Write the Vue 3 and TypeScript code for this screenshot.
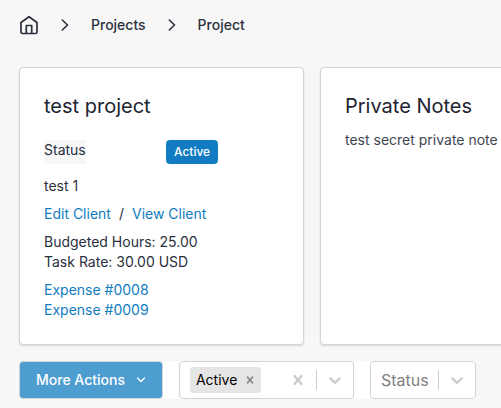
<script setup lang="ts">
import { ref } from 'vue'

interface Expense {
  id: number
  number: string
}

const expenses: Expense[] = [
  { id: 8, number: '0008' },
  { id: 9, number: '0009' },
]

const lifecycle = ref<string[]>(['Active'])
const status = ref('')

function removeState(name: string): void {
  lifecycle.value = lifecycle.value.filter((item) => item !== name)
}
</script>

<template>
  <main class="page">
    <nav class="breadcrumbs" aria-label="Breadcrumb">
      <a class="home" href="#" aria-label="Home">
        <svg width="20" height="20" viewBox="0 0 20 20" fill="none" stroke="currentColor" stroke-width="1.7" stroke-linecap="round" stroke-linejoin="round">
          <path d="M2 7.500 10 1.800l8 5.700V17a1.500 1.500 0 0 1-1.500 1.500h-13A1.500 1.500 0 0 1 2 17Z" />
          <path d="M7.300 18.200V10.500h5.400v7.700" />
        </svg>
      </a>
      <svg class="separator" width="8" height="12" viewBox="0 0 8 12" fill="none" stroke="currentColor" stroke-width="1.6" stroke-linecap="round" stroke-linejoin="round">
        <path d="M1.300 1 6.500 6l-5.200 5" />
      </svg>
      <a href="#">Projects</a>
      <svg class="separator" width="8" height="12" viewBox="0 0 8 12" fill="none" stroke="currentColor" stroke-width="1.6" stroke-linecap="round" stroke-linejoin="round">
        <path d="M1.300 1 6.500 6l-5.200 5" />
      </svg>
      <a href="#" aria-current="page">Project</a>
    </nav>

    <div class="cards">
      <section class="card">
        <h2>test project</h2>
        <div class="status-row">
          <span class="status-label">Status</span>
          <span class="badge">Active</span>
        </div>
        <div class="details">
          <p>test 1</p>
          <p class="client-links">
            <a href="#">Edit Client</a>
            <span>/</span>
            <a href="#">View Client</a>
          </p>
          <div>
            <p>Budgeted Hours: 25.00</p>
            <p>Task Rate: 30.00 USD</p>
          </div>
          <div>
            <p v-for="expense in expenses" :key="expense.id">
              <a href="#">Expense #{{ expense.number }}</a>
            </p>
          </div>
        </div>
      </section>

      <section class="card">
        <h2>Private Notes</h2>
        <p class="note">test secret private note</p>
      </section>
    </div>

    <div class="toolbar">
      <button class="more" type="button">
        More Actions
        <svg width="10" height="6" viewBox="0 0 10 6" fill="none" stroke="currentColor" stroke-width="1.3" stroke-linecap="round" stroke-linejoin="round">
          <path d="m1.500 1 3.500 3.500L8.500 1" />
        </svg>
      </button>

      <div class="field multi" role="group" aria-label="State">
        <div class="values">
          <span v-for="name in lifecycle" :key="name" class="chip">
            {{ name }}
            <button type="button" :aria-label="`Remove ${name}`" @click="removeState(name)">
              <svg width="14" height="14" viewBox="0 0 20 20" fill="currentColor">
                <path d="M14.348 14.849c-0.469 0.469-1.229 0.469-1.697 0l-2.651-3.030-2.651 3.029c-0.469 0.469-1.229 0.469-1.697 0-0.469-0.469-0.469-1.229 0-1.697l2.758-3.150-2.759-3.152c-0.469-0.469-0.469-1.228 0-1.697s1.228-0.469 1.697 0l2.652 3.031 2.651-3.031c0.469-0.469 1.228-0.469 1.697 0s0.469 1.229 0 1.697l-2.758 3.152 2.758 3.150c0.469 0.469 0.469 1.229 0 1.698z" />
              </svg>
            </button>
          </span>
        </div>
        <button class="indicator" type="button" aria-label="Clear all" @click="lifecycle = []">
          <svg width="20" height="20" viewBox="0 0 20 20" fill="currentColor">
            <path d="M14.348 14.849c-0.469 0.469-1.229 0.469-1.697 0l-2.651-3.030-2.651 3.029c-0.469 0.469-1.229 0.469-1.697 0-0.469-0.469-0.469-1.229 0-1.697l2.758-3.150-2.759-3.152c-0.469-0.469-0.469-1.228 0-1.697s1.228-0.469 1.697 0l2.652 3.031 2.651-3.031c0.469-0.469 1.228-0.469 1.697 0s0.469 1.229 0 1.697l-2.758 3.152 2.758 3.150c0.469 0.469 0.469 1.229 0 1.698z" />
          </svg>
        </button>
        <span class="divider"></span>
        <button class="indicator" type="button" aria-label="Show states">
          <svg width="20" height="20" viewBox="0 0 20 20" fill="currentColor">
            <path d="M4.516 7.548c0.436-0.446 1.043-0.481 1.576 0l3.908 3.747 3.908-3.747c0.533-0.481 1.141-0.446 1.574 0 0.436 0.445 0.408 1.197 0 1.615-0.406 0.418-4.695 4.502-4.695 4.502-0.217 0.223-0.502 0.335-0.787 0.335s-0.570-0.112-0.789-0.335c0 0-4.287-4.084-4.695-4.502s-0.436-1.170 0-1.615z" />
          </svg>
        </button>
      </div>

      <div class="field">
        <select v-model="status" aria-label="Status">
          <option value="">Status</option>
        </select>
        <span class="divider"></span>
        <span class="indicator">
          <svg width="20" height="20" viewBox="0 0 20 20" fill="currentColor">
            <path d="M4.516 7.548c0.436-0.446 1.043-0.481 1.576 0l3.908 3.747 3.908-3.747c0.533-0.481 1.141-0.446 1.574 0 0.436 0.445 0.408 1.197 0 1.615-0.406 0.418-4.695 4.502-4.695 4.502-0.217 0.223-0.502 0.335-0.787 0.335s-0.570-0.112-0.789-0.335c0 0-4.287-4.084-4.695-4.502s-0.436-1.170 0-1.615z" />
          </svg>
        </span>
      </div>
    </div>
  </main>
</template>

<style>
body {
  background: #f7f7f7;
}
</style>

<style scoped>
.page {
  padding: 15px 19px 9px;
  overflow: hidden;
  color: #2a303d;
  font-family: Inter, "Liberation Sans", sans-serif;
  font-size: 14px;
  line-height: 20px;
}

.page *,
.page {
  box-sizing: border-box;
}

h2,
p {
  margin: 0;
}

button {
  display: inline-flex;
  align-items: center;
  padding: 0;
  border: 0;
  background: none;
  color: inherit;
  font: inherit;
  cursor: pointer;
}

svg {
  display: block;
  flex: none;
}

a {
  color: #117cc1;
  text-decoration: none;
}

.breadcrumbs {
  display: flex;
  align-items: center;
  height: 20px;
  margin-bottom: 32px;
}

.breadcrumbs a {
  color: #2a303d;
  font-weight: 500;
}

.separator {
  margin: 0 22px;
}

.cards {
  display: grid;
  grid-auto-flow: column;
  grid-auto-columns: minmax(285px, 1fr);
  gap: 16px;
}

.card {
  padding: 24px;
  border: 1px solid #d1d5db;
  border-radius: 4px;
  background: #fff;
  box-shadow: 0 1px 2px rgb(0 0 0 / 12%);
}

h2 {
  color: #20242f;
  font-size: 20px;
  font-weight: 400;
  line-height: 28px;
}

.status-row {
  display: grid;
  grid-template-columns: 106px auto;
  justify-content: start;
  column-gap: 16px;
  margin: 20px 0 12px;
}

.status-label {
  justify-self: start;
  height: 24px;
  background: #f7f7f7;
}

.badge {
  padding: 0 8px;
  border-radius: 4px;
  background: #117cc1;
  color: #fff;
  font-size: 12px;
  font-weight: 500;
  line-height: 24px;
}

.details {
  display: grid;
  gap: 8px;
}

.client-links {
  display: flex;
  gap: 8px;
}

.note {
  margin-top: 10px;
  color: #3f4653;
}

.toolbar {
  display: flex;
  gap: 16px;
  width: fit-content;
  margin-top: 16px;
  background: #fff;
}

.more {
  gap: 11px;
  height: 38px;
  padding: 0 16px;
  border: 1px solid #d1d5db;
  border-radius: 4px;
  background: #4d9dd1;
  color: #fff;
  font-weight: 500;
}

.field {
  display: flex;
  align-items: center;
  height: 38px;
  border: 1px solid #d1d5db;
  border-radius: 4px;
  background: #fff;
}

.multi {
  width: 175px;
}

.values {
  display: flex;
  flex: 1;
  padding-left: 10px;
}

.chip {
  display: inline-flex;
  align-items: center;
  height: 26px;
  padding: 0 4px 0 6px;
  gap: 6px;
  border-radius: 2px;
  background: #e5e5e5;
  color: #000;
}

.chip button {
  color: #888;
}

.indicator {
  padding: 8px;
  color: #ccc;
}

.divider {
  width: 1px;
  height: 20px;
  background: #ccc;
}

select {
  padding: 0 9px 0 10px;
  border: 0;
  appearance: none;
  background: none;
  color: #808080;
  font: inherit;
  font-size: 16px;
  line-height: 24px;
}
</style>
